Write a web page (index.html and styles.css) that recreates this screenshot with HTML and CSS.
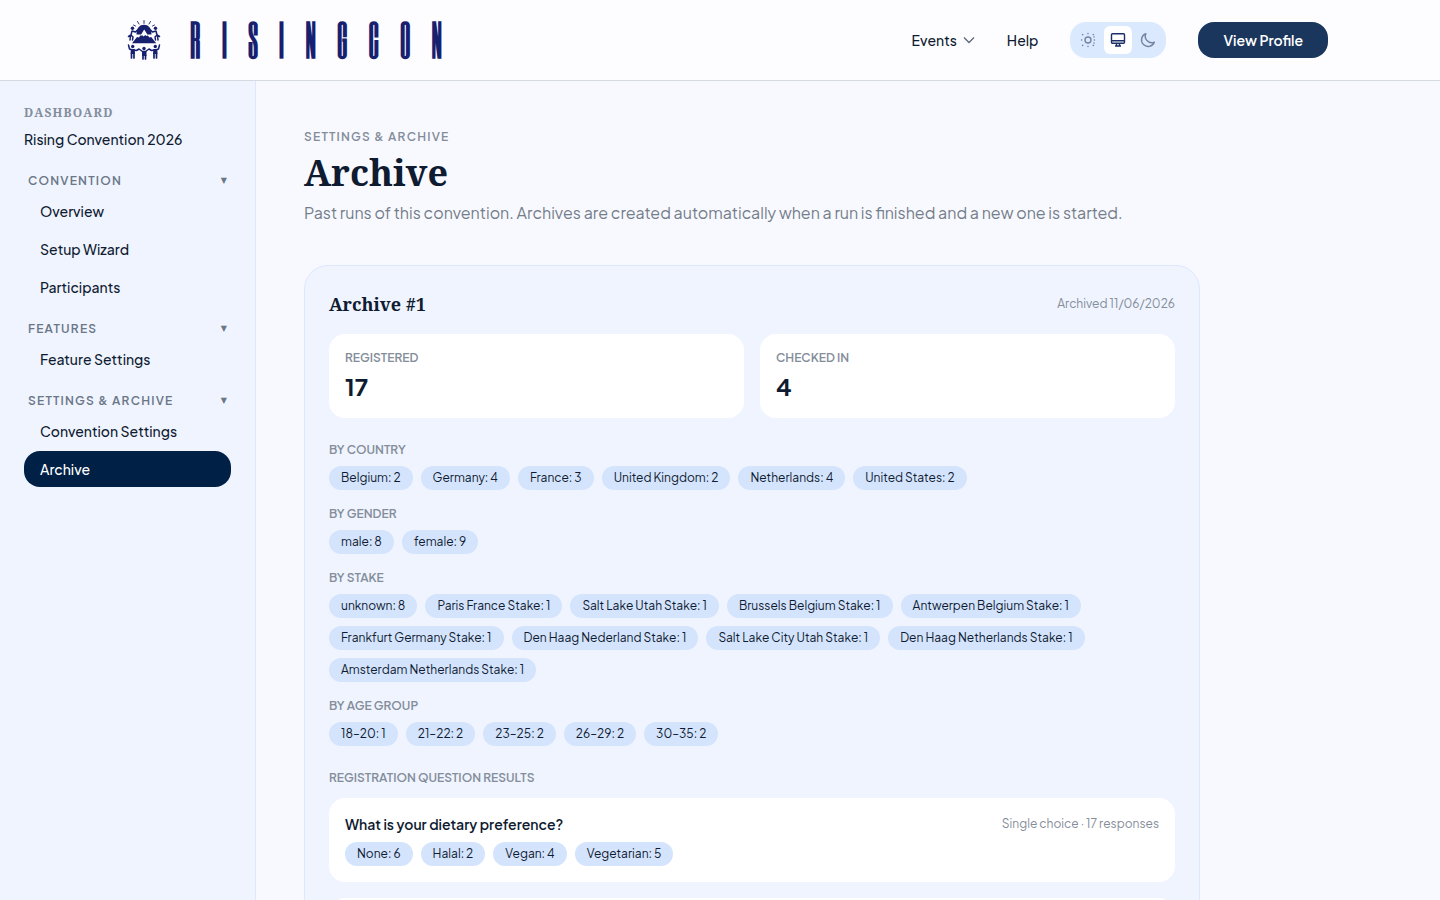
FILE: index.html
```html
<!DOCTYPE html>
<html lang="en">
<head>
<meta charset="utf-8">
<meta name="viewport" content="width=device-width, initial-scale=1">
<title>Archive – RisingCon</title>
<link rel="stylesheet" href="styles.css">
</head>
<body>
<div class="app">
  <header class="topbar">
    <a class="brand" href="#" aria-label="RisingCon home">
      <svg class="brand-mark" viewBox="0 0 36 42" aria-hidden="true">
        <g fill="none" stroke="currentColor" stroke-linecap="round" stroke-linejoin="round">
          <path d="M18 1.500v3M11.500 2.500l1.500 2.500M24.500 2.500l-1.500 2.500M7.500 6l2 1M28.500 6l-2 1" stroke-width=".9"/>
          <path d="M6 12l-1 4-2.500 1.500M5 16l2 2-.5 3M4.500 17l-.5 4M6 12l3.500 1 2-2M30 12l1 4 2.500 1.500M31 16l-2 2 .5 3M31.500 17l.5 4M30 12l-3.500 1-2-2" stroke-width="1.500"/>
          <path d="M2.500 26l1 4 3 1 4 .5 2.500-1.500 3.500 2.500h3l3.500-2.500 2.500 1.500 4-.5 3-1 1-4" stroke-width="1.500"/>
          <path d="M5.500 34v5M8 34v5M17 36v4M19.500 36v4M28 34v5M30.500 34v5" stroke-width="1.700"/>
        </g>
        <g fill="currentColor">
          <path d="M10.500 15.500C10.500 9 13.500 5.700 18 5.700s7.500 3.300 7.500 9.800z"/>
          <path d="M6 24.200l5-6.200 2 .5 5.200-8 5 8 2-.5 5 6.200z"/>
          <circle cx="6.500" cy="9.300" r="1.700"/><circle cx="29.500" cy="9.300" r="1.700"/>
          <circle cx="6.700" cy="27.500" r="1.700"/><circle cx="29.300" cy="27.500" r="1.700"/><circle cx="18" cy="29.500" r="1.700"/>
          <path d="M4.700 30h4.200v5H4.700zM27.200 30h4.200v5h-4.200zM16 32h4.500v5H16z"/>
        </g>
        <path d="M18.200 10.500l-4 6.500 2-.8 1.500 1.300 1.500-1.500 1.300 1 1.500-.5z" fill="#fdfdff"/>
      </svg>
      <span class="wordmark">RISINGCON</span>
    </a>
    <nav class="topnav" aria-label="Main">
      <button class="nav-link" type="button">Events
        <svg class="chevron" viewBox="0 0 12 12" aria-hidden="true"><path d="M1 3.500l5 5 5-5"/></svg>
      </button>
      <a class="nav-link" href="#">Help</a>
      <div class="theme" role="group" aria-label="Theme">
        <button class="theme-option" type="button" aria-label="Light">
          <svg viewBox="0 0 16 16" aria-hidden="true"><circle cx="8" cy="8" r="3"/><path d="M8 1.500v.2M8 14.300v.2M1.500 8h.2M14.300 8h.2M2.500 2.500l.3.300M13.200 13.200l.3.300M13.500 2.500l-.3.300M2.800 13.200l-.3.300M14 5h.1M14 11h.1" stroke-linecap="round"/></svg>
        </button>
        <button class="theme-option theme-active" type="button" aria-label="System" aria-pressed="true">
          <svg viewBox="0 0 16 16" aria-hidden="true"><path d="M2.500 1.700h11a1 1 0 0 1 1 1v7.600a1 1 0 0 1-1 1h-11a1 1 0 0 1-1-1V2.700a1 1 0 0 1 1-1zM1.500 8.800h13M6.500 11.300V14M9.500 11.300V14M5 14h6"/></svg>
        </button>
        <button class="theme-option" type="button" aria-label="Dark">
          <svg viewBox="0 0 16 16" aria-hidden="true"><path d="M14.300 10.200A6.500 6.500 0 0 1 5.800 1.700 6.600 6.600 0 1 0 14.300 10.200z" stroke-linejoin="round"/></svg>
        </button>
      </div>
      <button class="profile" type="button">View Profile</button>
    </nav>
  </header>

  <div class="body">
    <aside class="sidebar">
      <p class="side-kicker">DASHBOARD</p>
      <p class="side-name">Rising Convention 2026</p>
      <nav class="side-nav" aria-label="Dashboard">
        <section>
          <button class="group" type="button">CONVENTION <span class="caret">▼</span></button>
          <ul class="links">
            <li><a class="link" href="#">Overview</a></li>
            <li><a class="link" href="#">Setup Wizard</a></li>
            <li><a class="link" href="#">Participants</a></li>
          </ul>
        </section>
        <section>
          <button class="group" type="button">FEATURES <span class="caret">▼</span></button>
          <ul class="links">
            <li><a class="link" href="#">Feature Settings</a></li>
          </ul>
        </section>
        <section>
          <button class="group" type="button">SETTINGS &amp; ARCHIVE <span class="caret">▼</span></button>
          <ul class="links">
            <li><a class="link" href="#">Convention Settings</a></li>
            <li><a class="link link-active" href="#" aria-current="page">Archive</a></li>
          </ul>
        </section>
      </nav>
    </aside>

    <main class="main">
      <p class="eyebrow">SETTINGS &amp; ARCHIVE</p>
      <h1 class="title">Archive</h1>
      <p class="lead">Past runs of this convention. Archives are created automatically when a run is finished and a new one is started.</p>

      <article class="card">
        <div class="card-head">
          <h2 class="card-title">Archive #1</h2>
          <span class="meta">Archived 11/06/2026</span>
        </div>
        <div class="stats">
          <div class="stat"><p class="label">REGISTERED</p><p class="number">17</p></div>
          <div class="stat"><p class="label">CHECKED IN</p><p class="number">4</p></div>
        </div>
        <div class="breakdowns">
          <section class="breakdown">
            <h3 class="label">BY COUNTRY</h3>
            <ul class="chips"><li>Belgium: 2</li><li>Germany: 4</li><li>France: 3</li><li>United Kingdom: 2</li><li>Netherlands: 4</li><li>United States: 2</li></ul>
          </section>
          <section class="breakdown">
            <h3 class="label">BY GENDER</h3>
            <ul class="chips"><li>male: 8</li><li>female: 9</li></ul>
          </section>
          <section class="breakdown">
            <h3 class="label">BY STAKE</h3>
            <ul class="chips"><li>unknown: 8</li><li>Paris France Stake: 1</li><li>Salt Lake Utah Stake: 1</li><li>Brussels Belgium Stake: 1</li><li>Antwerpen Belgium Stake: 1</li><li>Frankfurt Germany Stake: 1</li><li>Den Haag Nederland Stake: 1</li><li>Salt Lake City Utah Stake: 1</li><li>Den Haag Netherlands Stake: 1</li><li>Amsterdam Netherlands Stake: 1</li></ul>
          </section>
          <section class="breakdown">
            <h3 class="label">BY AGE GROUP</h3>
            <ul class="chips"><li>18–20: 1</li><li>21–22: 2</li><li>23–25: 2</li><li>26–29: 2</li><li>30–35: 2</li></ul>
          </section>
        </div>
        <section class="questions">
          <h3 class="label">REGISTRATION QUESTION RESULTS</h3>
          <div class="question-list">
            <div class="question">
              <div class="question-head">
                <h4 class="question-title">What is your dietary preference?</h4>
                <span class="meta">Single choice · 17 responses</span>
              </div>
              <ul class="chips"><li>None: 6</li><li>Halal: 2</li><li>Vegan: 4</li><li>Vegetarian: 5</li></ul>
            </div>
            <div class="question"></div>
          </div>
        </section>
      </article>
    </main>
  </div>
</div>
</body>
</html>
```
FILE: styles.css
```css
* { box-sizing: border-box; }

body, p, h1, h2, h3, h4, ul { margin: 0; padding: 0; }
ul { list-style: none; }
a { color: inherit; text-decoration: none; }
button { font: inherit; color: inherit; background: none; border: 0; padding: 0; cursor: pointer; }

body {
  font-family: "Plus Jakarta Sans", Inter, sans-serif;
  font-size: 14px;
  line-height: 20px;
  color: #0f1b31;
  background: #f8f9ff;
}

.app { display: flex; flex-direction: column; height: 100vh; overflow: hidden; }

.topbar {
  display: flex;
  align-items: center;
  justify-content: space-between;
  flex: none;
  height: 81px;
  padding: 0 112px 0 126px;
  background: #fdfdff;
  border-bottom: 1px solid #d5d9e0;
}
.brand { display: flex; align-items: center; gap: 28px; color: #17206f; }
.brand-mark { width: 36px; height: 42px; }
.wordmark { font-family: "Six Caps", "League Gothic", "Big Shoulders Display", "Bebas Neue", Antonio, "Fjalla One", Oswald, "Barlow Condensed", "Roboto Condensed", "Liberation Mono", monospace; font-size: 42px; line-height: 56px; font-weight: 700; letter-spacing: 21px; }

.topnav { display: flex; align-items: center; gap: 32px; font-weight: 500; }
.nav-link { display: flex; align-items: center; gap: 6px; }
.chevron { width: 12px; height: 12px; fill: none; stroke: #5d6878; stroke-width: 1.3; }
.theme { display: flex; gap: 2px; padding: 4px; border-radius: 16px; background: #dbe9ff; }
.theme-option { display: grid; place-items: center; width: 28px; height: 28px; border-radius: 6px; color: #7484a0; }
.theme-option svg { width: 16px; height: 16px; fill: none; stroke: currentColor; stroke-width: 1.4; }
.theme-active { color: #1a2f66; background: #fff; }
.profile { height: 36px; padding: 0 25px; border-radius: 16px; font-weight: 600; color: #fff; background: #1b365d; }

.body { display: flex; flex: 1; min-height: 0; }

.sidebar { flex: none; width: 256px; padding: 24px; background: #eff4ff; border-right: 1px solid #dbe8fe; }
.side-kicker { font-family: "Noto Serif", "Liberation Serif", serif; font-size: 12px; line-height: 16px; font-weight: 700; letter-spacing: 0.1em; color: #848d9a; }
.side-name { margin-top: 8px; font-weight: 500; }
.side-nav { display: flex; flex-direction: column; gap: 12px; margin-top: 20px; }
.group { display: flex; align-items: center; justify-content: space-between; width: 100%; padding: 4px; font-size: 12px; line-height: 16px; font-weight: 600; letter-spacing: 0.1em; color: #6b7686; }
.caret { font-family: "DejaVu Sans", sans-serif; font-size: 8px; letter-spacing: 0; }
.links { display: flex; flex-direction: column; gap: 2px; }
.link { display: block; padding: 8px 16px; border-radius: 16px; font-weight: 500; }
.link-active { color: #fff; background: #002045; }

.main { flex: 1; min-width: 0; padding: 48px; overflow: hidden; }
.main > * { max-width: 896px; }
.eyebrow { font-size: 12px; line-height: 16px; font-weight: 600; letter-spacing: 0.1em; color: #848d9a; }
.title { margin-top: 4px; font-family: "Noto Serif", "DejaVu Serif", serif; font-size: 36px; line-height: 48px; font-weight: 700; }
.lead { margin-top: 4px; font-size: 16px; line-height: 24px; color: #747d8a; }

.card { margin-top: 40px; padding: 24px; border: 1px solid #dbe8fe; border-radius: 24px; background: #eff4ff; }
.card-head { display: flex; justify-content: space-between; }
.card-title { font-family: "Noto Serif", "DejaVu Serif", serif; font-size: 18px; line-height: 28px; font-weight: 700; }
.meta { font-size: 12px; line-height: 16px; color: #848d9a; }
.card-head .meta { padding-top: 6px; }

.stats { display: grid; grid-template-columns: 1fr 1fr; gap: 16px; margin-top: 16px; }
.stat { padding: 16px; border-radius: 16px; background: #fff; }
.label { font-size: 12px; line-height: 16px; font-weight: 600; color: #848d9a; }
.number { margin-top: 4px; font-size: 24px; line-height: 32px; font-weight: 700; }

.breakdowns { display: flex; flex-direction: column; gap: 16px; margin-top: 24px; }
.breakdown { display: flex; flex-direction: column; gap: 8px; }
.chips { display: flex; flex-wrap: wrap; gap: 8px; }
.chips li { padding: 4px 12px; border-radius: 12px; font-size: 12px; line-height: 16px; background: #d4e4fd; }

.questions { display: flex; flex-direction: column; gap: 12px; margin-top: 24px; }
.question-list { display: flex; flex-direction: column; gap: 16px; }
.question { min-height: 84px; padding: 16px; border-radius: 16px; background: #fff; }
.question-head { display: flex; align-items: center; justify-content: space-between; margin-bottom: 8px; }
.question-title { font-size: 14px; line-height: 20px; font-weight: 600; }
```
